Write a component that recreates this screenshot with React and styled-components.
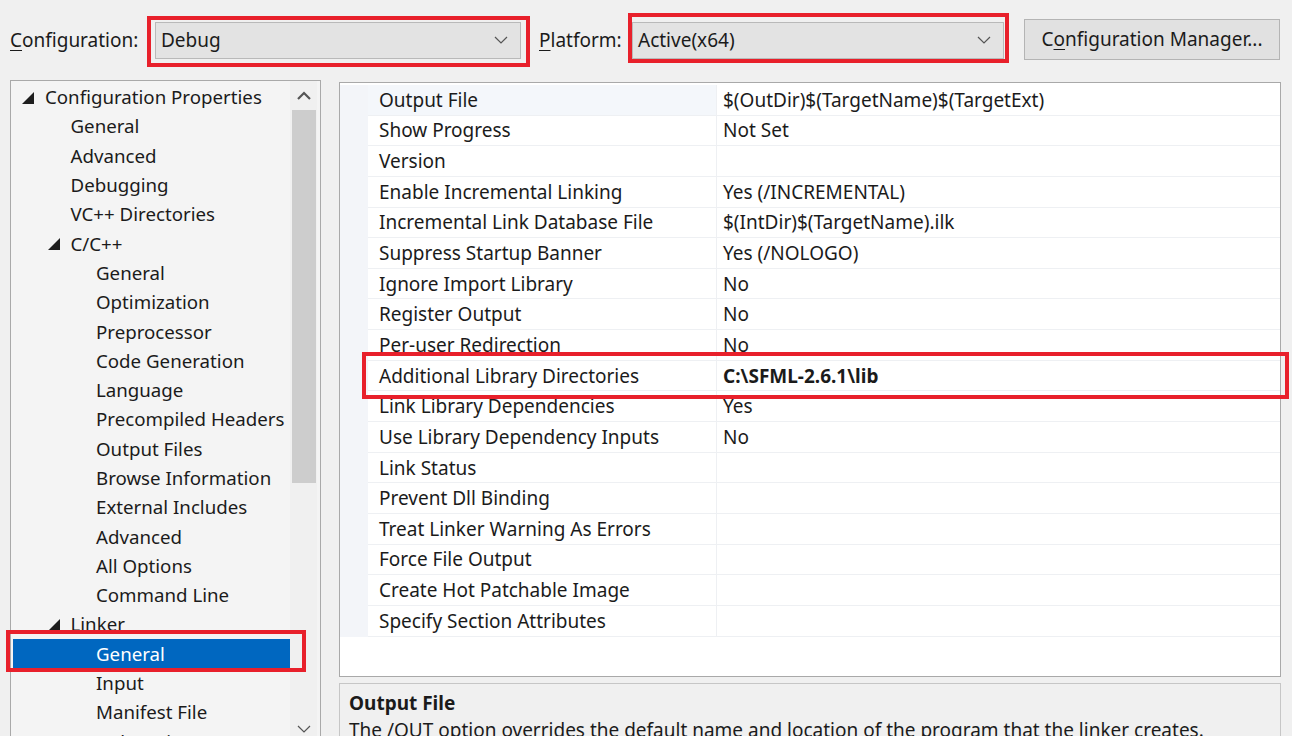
import React from 'react';
import styled, { createGlobalStyle, css } from 'styled-components';

const GlobalStyle = createGlobalStyle`
  html, body {
    margin: 0;
    padding: 0;
    background: #f0f0f0;
  }
  body {
    font-family: "Noto Sans", "Open Sans", sans-serif;
    color: #1b1b1b;
  }
`;

const Page = styled.div`
  width: 1292px;
  height: 736px;
  overflow: hidden;
  background: #f0f0f0;
  font-size: 19px;
`;

// red annotation frame drawn over a part of the dialog
const marked = css`
  position: relative;
  &::after {
    content: '';
    position: absolute;
    z-index: 2;
    top: ${(p) => -p.$mt}px;
    bottom: ${(p) => -p.$mb}px;
    left: ${(p) => -p.$ml}px;
    right: ${(p) => -p.$mr}px;
    border: 4px solid #e8202b;
    pointer-events: none;
  }
`;

const TopBar = styled.div`
  height: 80px;
  display: flex;
  align-items: center;
`;

const Label = styled.div`
  width: ${(p) => p.$w}px;
  padding-left: ${(p) => p.$pl}px;
  box-sizing: border-box;
  font-size: 19px;
  white-space: nowrap;
  u { text-decoration: underline; text-underline-offset: 3px; }
`;

const Combo = styled.div`
  width: ${(p) => p.$w}px;
  height: 37px;
  box-sizing: border-box;
  background: #e3e3e3;
  border: 1px solid #b9b9b9;
  display: flex;
  align-items: center;
  justify-content: space-between;
  padding: 0 12px 0 5px;
  font-size: 19px;
  ${(p) => p.$mark && marked}
`;

const Button = styled.div`
  margin-left: 20px;
  width: 256px;
  height: 41px;
  box-sizing: border-box;
  background: #e1e1e1;
  border: 1px solid #b4b4b4;
  display: flex;
  align-items: center;
  justify-content: center;
  font-size: 19px;
  margin-top: -2px;
  u { text-decoration: underline; text-underline-offset: 3px; }
`;

const Body = styled.div`
  display: flex;
  padding-left: 10px;
  align-items: flex-start;
`;

const TreePanel = styled.div`
  width: 311px;
  height: 665px;
  box-sizing: border-box;
  border: 1px solid #a9a9a9;
  background: #f4f4f4;
  display: flex;
  padding-right: 3px;
`;

const TreeList = styled.div`
  flex: 1;
  padding-top: 1px;
  font-size: 18.7px;
`;

const TreeRow = styled.div`
  height: 29.3px;
  display: flex;
  align-items: center;
  margin-left: 2px;
  padding-left: ${(p) => 9 + p.$level * 25.5}px;
  white-space: nowrap;
  ${(p) => p.$selected && css`
    background: #0067c0;
    color: #ffffff;
  `}
  ${(p) => p.$mark && marked}
`;

const Expander = styled.span`
  width: 23px;
  flex: none;
  display: flex;
  align-items: center;
  padding-top: 2px;
`;

const ScrollBar = styled.div`
  width: 27px;
  display: flex;
  flex-direction: column;
  align-items: center;
  background: #f0f0f0;
`;

const ScrollArrow = styled.div`
  height: 29px;
  display: flex;
  align-items: center;
  justify-content: center;
`;

const Thumb = styled.div`
  width: 24px;
  height: 373px;
  background: #cdcdcd;
`;

const Track = styled.div`
  flex: 1;
`;

const RightCol = styled.div`
  margin-left: 18px;
  margin-top: 2px;
  width: 942px;
  display: flex;
  flex-direction: column;
  gap: 6px;
`;

const GridPanel = styled.div`
  height: 595px;
  box-sizing: border-box;
  border: 1px solid #a9a9a9;
  background: #ffffff;
  padding-top: 2px;
`;

const PropRow = styled.div`
  display: grid;
  grid-template-columns: 28px 348px 1fr;
  height: 30.65px;
  ${(p) => p.$mark && marked}
`;

const Gutter = styled.div`
  background: #f3f5f9;
`;

const Cell = styled.div`
  display: flex;
  align-items: center;
  padding-left: ${(p) => p.$pl}px;
  border-bottom: 1px solid #eef0f3;
  border-left: ${(p) => (p.$divider ? '1px solid #eef0f3' : 'none')};
  background: ${(p) => (p.$active ? '#f4f7fb' : '#ffffff')};
  font-weight: ${(p) => (p.$bold ? 700 : 400)};
  white-space: nowrap;
`;

const DescPanel = styled.div`
  height: 80px;
  box-sizing: border-box;
  border: 1px solid #c6c6c6;
  background: #f0f0f0;
  padding: 6px 9px;
`;

const DescTitle = styled.div`
  font-weight: 700;
  font-size: 19px;
  line-height: 26px;
`;

const DescText = styled.div`
  font-size: 19px;
  line-height: 28px;
`;

function Chevron({ up }) {
  return (
    <svg width="14" height="9" viewBox="0 0 14 9">
      <polyline
        points={up ? '1,8 7,2 13,8' : '1,1 7,7 13,1'}
        fill="none"
        stroke="#555"
        strokeWidth={up ? 2.2 : 1.2}
      />
    </svg>
  );
}

function Triangle() {
  return (
    <svg width="12" height="12" viewBox="0 0 12 12">
      <polygon points="12,0 12,12 0,12" fill="#1e1e1e" />
    </svg>
  );
}

const tree = [
  { label: 'Configuration Properties', level: 0, open: true },
  { label: 'General', level: 1 },
  { label: 'Advanced', level: 1 },
  { label: 'Debugging', level: 1 },
  { label: 'VC++ Directories', level: 1 },
  { label: 'C/C++', level: 1, open: true },
  { label: 'General', level: 2 },
  { label: 'Optimization', level: 2 },
  { label: 'Preprocessor', level: 2 },
  { label: 'Code Generation', level: 2 },
  { label: 'Language', level: 2 },
  { label: 'Precompiled Headers', level: 2 },
  { label: 'Output Files', level: 2 },
  { label: 'Browse Information', level: 2 },
  { label: 'External Includes', level: 2 },
  { label: 'Advanced', level: 2 },
  { label: 'All Options', level: 2 },
  { label: 'Command Line', level: 2 },
  { label: 'Linker', level: 1, open: true },
  { label: 'General', level: 2, selected: true },
  { label: 'Input', level: 2 },
  { label: 'Manifest File', level: 2 },
  { label: 'Debugging', level: 2 },
];

const props = [
  ['Output File', '$(OutDir)$(TargetName)$(TargetExt)'],
  ['Show Progress', 'Not Set'],
  ['Version', ''],
  ['Enable Incremental Linking', 'Yes (/INCREMENTAL)'],
  ['Incremental Link Database File', '$(IntDir)$(TargetName).ilk'],
  ['Suppress Startup Banner', 'Yes (/NOLOGO)'],
  ['Ignore Import Library', 'No'],
  ['Register Output', 'No'],
  ['Per-user Redirection', 'No'],
  ['Additional Library Directories', 'C:\\SFML-2.6.1\\lib', true],
  ['Link Library Dependencies', 'Yes'],
  ['Use Library Dependency Inputs', 'No'],
  ['Link Status', ''],
  ['Prevent Dll Binding', ''],
  ['Treat Linker Warning As Errors', ''],
  ['Force File Output', ''],
  ['Create Hot Patchable Image', ''],
  ['Specify Section Attributes', ''],
];

export default function App() {
  return (
    <Page>
      <GlobalStyle />
      <TopBar>
        <Label $w={155} $pl={10}><u>C</u>onfiguration:</Label>
        <Combo $w={366} $mark $mt={7} $mb={9} $ml={9} $mr={10}>
          <span>Debug</span>
          <Chevron />
        </Combo>
        <Label $w={111} $pl={18}><u>P</u>latform:</Label>
        <Combo $w={372} $mark $mt={10} $mb={5} $ml={5} $mr={6}>
          <span>Active(x64)</span>
          <Chevron />
        </Combo>
        <Button>C<u>o</u>nfiguration Manager...</Button>
      </TopBar>
      <Body>
        <TreePanel>
          <TreeList>
            {tree.map((t, i) => (
              <TreeRow
                key={i}
                $level={t.level}
                $selected={t.selected}
                $mark={t.selected}
                $mt={9}
                $mb={4}
                $ml={7}
                $mr={16}
              >
                <Expander>{t.open && <Triangle />}</Expander>
                {t.label}
              </TreeRow>
            ))}
          </TreeList>
          <ScrollBar>
            <ScrollArrow><Chevron up /></ScrollArrow>
            <Thumb />
            <Track />
            <ScrollArrow><Chevron /></ScrollArrow>
          </ScrollBar>
        </TreePanel>
        <RightCol>
          <GridPanel>
            {props.map(([name, value, bold], i) => (
              <PropRow key={i} $mark={bold} $mt={9} $mb={8} $ml={-22} $mr={9}>
                <Gutter />
                <Cell $pl={11} $active={i === 0}>{name}</Cell>
                <Cell $pl={6} $divider $bold={bold}>{value}</Cell>
              </PropRow>
            ))}
          </GridPanel>
          <DescPanel>
            <DescTitle>Output File</DescTitle>
            <DescText>The /OUT option overrides the default name and location of the program that the linker creates.</DescText>
          </DescPanel>
        </RightCol>
      </Body>
    </Page>
  );
}
